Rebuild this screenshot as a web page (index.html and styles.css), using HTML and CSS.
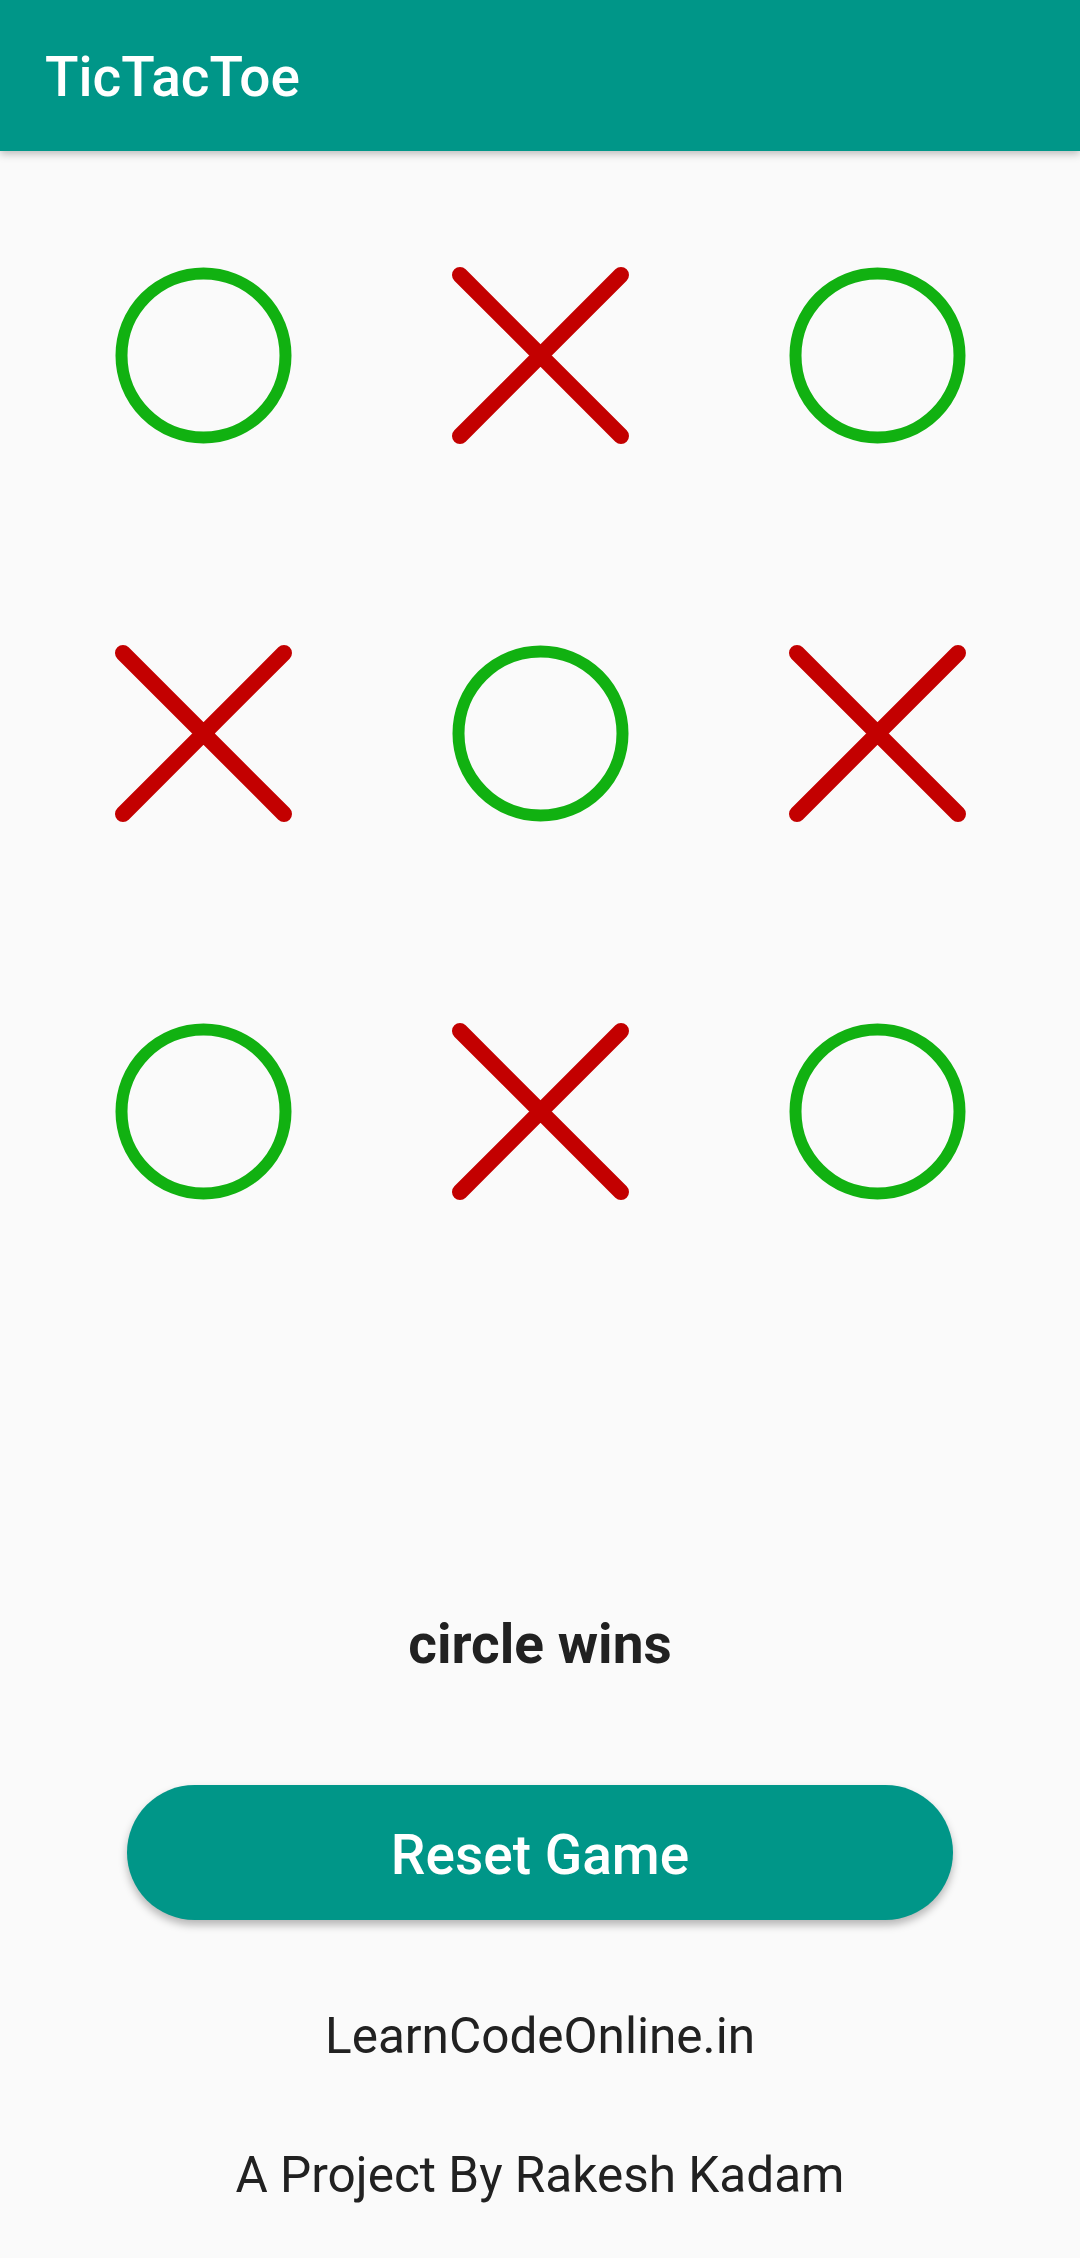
FILE: index.html
```html
<!DOCTYPE html>
<html>
<head>
<meta charset="utf-8">
<link rel="stylesheet" href="styles.css">
</head>
<body>
<div class="app">
  <header class="appbar"><span class="title">TicTacToe</span></header>
  <main class="content">
    <div class="board">
      <div class="cell"><svg class="mark" viewBox="0 0 177 177"><circle class="o" cx="88.5" cy="88.5" r="82"/></svg></div>
      <div class="cell"><svg class="mark" viewBox="0 0 177 177"><path class="x" d="M8 8L169 169M169 8L8 169"/></svg></div>
      <div class="cell"><svg class="mark" viewBox="0 0 177 177"><circle class="o" cx="88.5" cy="88.5" r="82"/></svg></div>
      <div class="cell"><svg class="mark" viewBox="0 0 177 177"><path class="x" d="M8 8L169 169M169 8L8 169"/></svg></div>
      <div class="cell"><svg class="mark" viewBox="0 0 177 177"><circle class="o" cx="88.5" cy="88.5" r="82"/></svg></div>
      <div class="cell"><svg class="mark" viewBox="0 0 177 177"><path class="x" d="M8 8L169 169M169 8L8 169"/></svg></div>
      <div class="cell"><svg class="mark" viewBox="0 0 177 177"><circle class="o" cx="88.5" cy="88.5" r="82"/></svg></div>
      <div class="cell"><svg class="mark" viewBox="0 0 177 177"><path class="x" d="M8 8L169 169M169 8L8 169"/></svg></div>
      <div class="cell"><svg class="mark" viewBox="0 0 177 177"><circle class="o" cx="88.5" cy="88.5" r="82"/></svg></div>
    </div>
    <div class="status">circle wins</div>
    <button class="reset">Reset Game</button>
    <div class="footer-line site">LearnCodeOnline.in</div>
    <div class="footer-line author">A Project By Rakesh Kadam</div>
  </main>
</div>
</body>
</html>
```

FILE: styles.css
```css
html, body {
  margin: 0;
  padding: 0;
}
body {
  background: #fafafa;
  font-family: Roboto, "Liberation Sans", sans-serif;
  color: #212121;
  width: 1080px;
  height: 2258px;
  overflow: hidden;
}
.app {
  display: flex;
  flex-direction: column;
  height: 100%;
}
.appbar {
  height: 151px;
  background: #009688;
  display: flex;
  align-items: center;
  padding-left: 45px;
  box-shadow: 0 3px 8px rgba(0,0,0,0.25);
  position: relative;
  z-index: 1;
  flex-shrink: 0;
}
.title {
  color: #ffffff;
  font-size: 55px;
  font-weight: 500;
  line-height: 1;
  margin-top: 4px;
}
.content {
  display: flex;
  flex-direction: column;
  align-items: center;
}
.board {
  margin-top: 15px;
  display: grid;
  grid-template-columns: repeat(3, 337px);
  grid-template-rows: repeat(3, 378px);
}
.cell {
  display: flex;
  align-items: center;
  justify-content: center;
}
.mark {
  width: 177px;
  height: 177px;
  overflow: visible;
  filter: blur(0.6px);
}
.o {
  fill: none;
  stroke: #11b111;
  stroke-width: 12;
}
.x {
  fill: none;
  stroke: #c30000;
  stroke-width: 16;
  stroke-linecap: round;
}
.status {
  margin-top: 311px;
  font-size: 55px;
  font-weight: 700;
  line-height: 1.2;
  color: #212121;
}
.reset {
  margin-top: 108px;
  width: 826px;
  height: 135px;
  border: none;
  border-radius: 67.5px;
  background: #009688;
  color: #ffffff;
  font-family: Roboto, "Liberation Sans", sans-serif;
  font-size: 55px;
  font-weight: 500;
  box-shadow: 0 5px 8px rgba(0,0,0,0.28);
  padding: 4px 0 0 0;
}
.footer-line {
  font-size: 49.5px;
  font-weight: 400;
  line-height: 1.2;
  color: #212121;
}
.site {
  margin-top: 87px;
}
.author {
  margin-top: 80px;
}
```
